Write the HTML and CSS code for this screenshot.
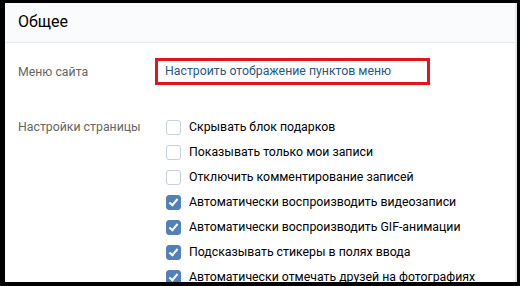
FILE: index.html
```html
<!DOCTYPE html>
<html lang="ru">
<head>
    <meta charset="UTF-8">
    <meta name="viewport" content="width=device-width, initial-scale=1.0">
    <title>Общее</title>
    <link rel="stylesheet" href="styles.css">
</head>
<body>

    <div class="frame">
        <div class="card">
            <div class="card-header">Общее</div>

            <div class="row row-menu">
                <div class="row-label">Меню сайта</div>
                <div class="row-value">
                    <a class="highlight-link" href="#">Настроить отображение пунктов меню</a>
                </div>
            </div>

            <div class="row row-settings">
                <div class="row-label">Настройки страницы</div>
                <div class="row-value">
                    <label class="check"><span class="box"></span>Скрывать блок подарков</label>
                    <label class="check"><span class="box"></span>Показывать только мои записи</label>
                    <label class="check"><span class="box"></span>Отключить комментирование записей</label>
                    <label class="check checked"><span class="box"></span>Автоматически воспроизводить видеозаписи</label>
                    <label class="check checked"><span class="box"></span>Автоматически воспроизводить GIF-анимации</label>
                    <label class="check checked"><span class="box"></span>Подсказывать стикеры в полях ввода</label>
                    <label class="check checked"><span class="box"></span>Автоматически отмечать друзей на фотографиях</label>
                </div>
            </div>
        </div>
    </div>

</body>
</html>
```

FILE: styles.css
```css
html, body {
    margin: 0;
    padding: 0;
    height: 100%;
    background-color: #000;
    overflow: hidden;
}

body {
    font-family: Roboto, "Open Sans", Arial, sans-serif;
    font-size: 12.3px;
}

.frame {
    position: fixed;
    top: 3px;
    left: 5px;
    right: 3px;
    bottom: 4px;
    background-color: #fff;
    overflow: hidden;
}

.card {
    height: 100%;
    border-right: 2px solid #e7e8ec;
    box-sizing: border-box;
}

.card-header {
    height: 39px;
    line-height: 38px;
    padding-left: 13px;
    font-size: 16px;
    color: #000;
    background-color: #fafbfc;
    border-bottom: 1px solid #e7e8ec;
}

.row {
    display: grid;
    grid-template-columns: 148px 1fr;
    padding-left: 13px;
}

.row-label {
    color: #656565;
}

.row-menu {
    margin-top: 15px;
    align-items: center;
}

.highlight-link {
    display: inline-block;
    width: 255px;
    margin-left: -11px;
    padding: 3px 7px 4px 7px;
    border: 3px solid #e3151c;
    color: #2a5885;
    text-decoration: none;
}

.row-settings {
    margin-top: 34px;
}

.row-settings .row-label {
    margin-top: 1px;
}

.row-settings .row-value {
    display: flex;
    flex-direction: column;
    gap: 9px;
}

.check {
    display: flex;
    align-items: center;
    color: #000;
    height: 16px;
}

.box {
    width: 13px;
    height: 13px;
    margin-right: 8px;
    border: 1px solid #c5d0db;
    border-radius: 3px;
    background-color: #fff;
    position: relative;
    flex-shrink: 0;
}

.checked .box {
    background-color: #5181b8;
    border-color: #5181b8;
}

.checked .box::after {
    content: "";
    position: absolute;
    left: 4px;
    top: 1px;
    width: 3px;
    height: 7px;
    border: solid #fff;
    border-width: 0 2px 2px 0;
    transform: rotate(40deg);
}
```
